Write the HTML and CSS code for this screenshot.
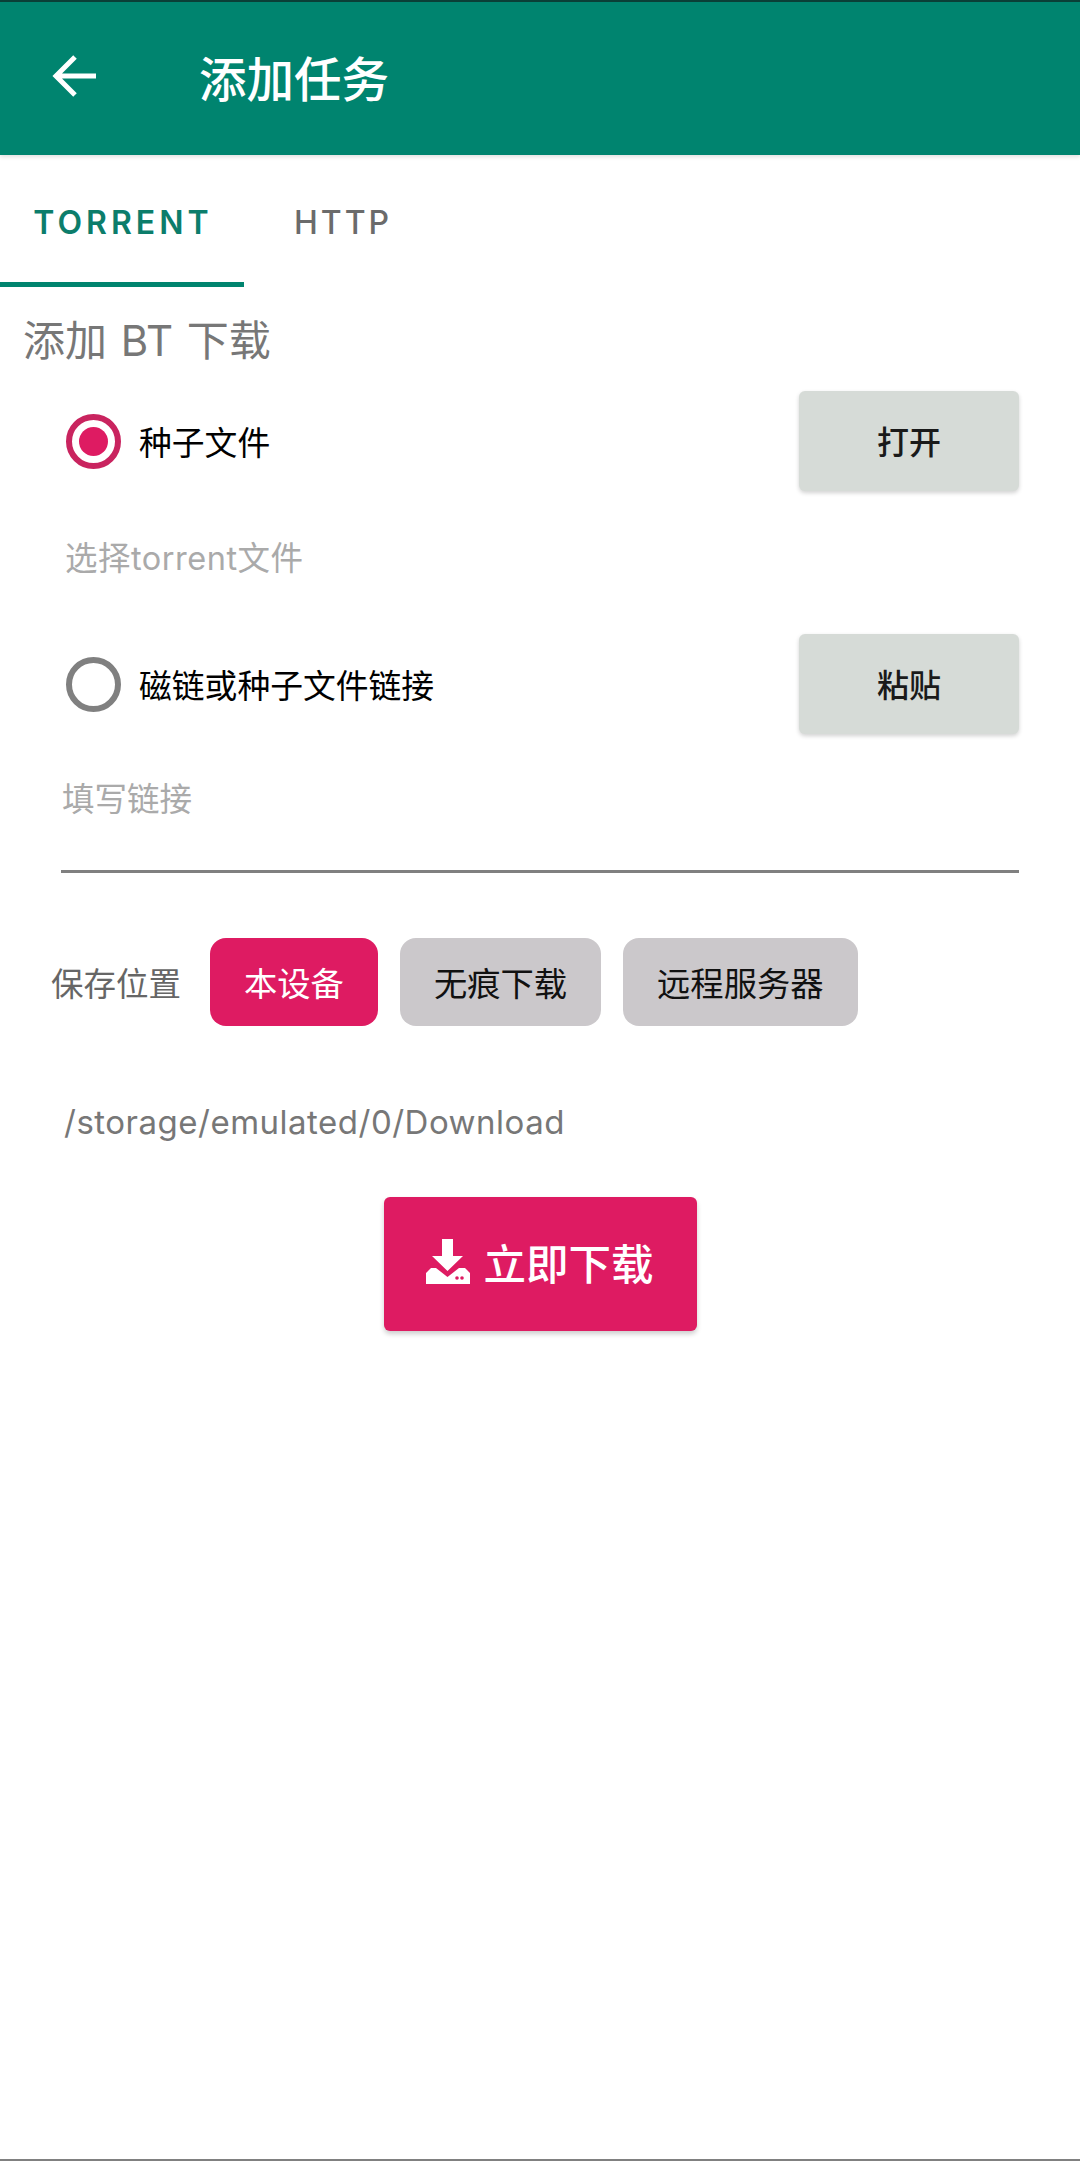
FILE: index.html
```html
<!DOCTYPE html>
<html lang="zh-CN">
<head>
    <meta charset="UTF-8">
    <meta name="viewport" content="width=device-width, initial-scale=1.0">
    <title>添加任务</title>
    <link rel="stylesheet" href="styles.css">
</head>
<body>
    <header class="appbar">
        <svg class="back-icon" viewBox="0 0 44 44" width="44" height="44">
            <path d="M44 22H4M23 3L4 22L23 41" fill="none" stroke="#fff" stroke-width="5"/>
        </svg>
        <h1 class="appbar-title">添加任务</h1>
    </header>

    <nav class="tabs">
        <div class="tab tab-active">TORRENT</div>
        <div class="tab">HTTP</div>
    </nav>

    <main class="content">
        <h2 class="section-title">添加 BT 下载</h2>

        <div class="source-row">
            <label class="radio-label">
                <span class="radio radio-checked"></span>
                种子文件
            </label>
            <button class="btn-light">打开</button>
        </div>
        <div class="hint file-hint">选择torrent文件</div>

        <div class="source-row">
            <label class="radio-label">
                <span class="radio"></span>
                磁链或种子文件链接
            </label>
            <button class="btn-light">粘贴</button>
        </div>
        <div class="hint link-input">填写链接</div>

        <div class="save-row">
            <span class="save-label">保存位置</span>
            <button class="chip chip-active">本设备</button>
            <button class="chip">无痕下载</button>
            <button class="chip">远程服务器</button>
        </div>

        <div class="save-path">/storage/emulated/0/Download</div>

        <div class="submit-row">
            <button class="btn-download">
                <svg class="download-icon" viewBox="0 0 44 45" width="44" height="45">
                    <path d="M16 0H27V17H37L21.500 32L6 17H16Z" fill="#fff"/>
                    <path d="M5 29H10L21.500 38L33 29H39L44 34V45H0V34Z" fill="#fff"/>
                    <circle cx="31" cy="39" r="1.800" fill="#de1b62"/>
                    <circle cx="36" cy="39" r="1.800" fill="#de1b62"/>
                </svg>
                立即下载
            </button>
        </div>
    </main>
</body>
</html>
```

FILE: styles.css
```css
* {
    box-sizing: border-box;
}

body {
    margin: 0;
    height: 2161px;
    background: #fff;
    border-bottom: 2px solid #808080;
    font-family: 'Inter', 'Noto Sans CJK SC', sans-serif;
    overflow: hidden;
}

.appbar {
    display: flex;
    align-items: center;
    height: 155px;
    padding-left: 52px;
    background: #00846f;
    border-top: 2px solid #0a3f37;
    box-shadow: 0 2px 4px rgba(0, 0, 0, 0.12);
}

.back-icon {
    flex: none;
    margin-top: -5px;
}

.appbar-title {
    margin: -4px 0 0 103px;
    font-size: 47.500px;
    font-weight: 500;
    color: #fff;
}

.tabs {
    display: flex;
    height: 132px;
}

.tab {
    display: flex;
    justify-content: center;
    width: 244px;
    padding-top: 50px;
    font-size: 32px;
    line-height: 36px;
    font-weight: 500;
    letter-spacing: 3px;
    color: #6b6b6b;
}

.tab-active {
    padding-left: 2px;
    letter-spacing: 4px;
    color: #0c7d6b;
    font-weight: 600;
    border-bottom: 5px solid #00846f;
}

.tab + .tab {
    width: 198px;
}

.section-title {
    margin: 0;
    height: 104px;
    padding-left: 23px;
    font-size: 42px;
    line-height: 107px;
    font-weight: 400;
    word-spacing: 2px;
    color: #777;
}

.source-row {
    display: flex;
    justify-content: space-between;
    align-items: center;
    height: 100px;
    padding: 0 61px 0 66px;
}

.radio-label {
    display: flex;
    align-items: center;
    padding-bottom: 2px;
    font-size: 32.800px;
    color: #000;
}

.radio {
    display: flex;
    justify-content: center;
    align-items: center;
    width: 55px;
    height: 55px;
    margin: 2px 18px 0 0;
    border: 6px solid #808080;
    border-radius: 50%;
}

.radio-checked {
    border-color: #c9245f;
}

.radio-checked::after {
    content: "";
    width: 29px;
    height: 29px;
    border-radius: 50%;
    background: #de1b62;
}

.btn-light {
    width: 220px;
    height: 100px;
    padding-bottom: 3px;
    border: none;
    border-radius: 6px;
    background: #d6dbd7;
    font-family: inherit;
    font-size: 32px;
    font-weight: 500;
    color: #1a1a1a;
    box-shadow: 0 2px 4px rgba(0, 0, 0, 0.18);
}

.hint {
    font-size: 32.500px;
    color: #aaa;
}

.file-hint {
    height: 143px;
    padding: 48px 0 0 65px;
    line-height: 40px;
    letter-spacing: 0.500px;
}

.link-input {
    height: 139px;
    margin: 0 61px;
    padding: 46px 0 0 1px;
    line-height: 40px;
    border-bottom: 3px solid #808080;
}

.save-row {
    display: flex;
    align-items: center;
    margin-top: 65px;
    padding-left: 51px;
}

.save-label {
    width: 159px;
    padding-bottom: 2px;
    font-size: 32.500px;
    color: #666;
}

.chip {
    height: 88px;
    margin-right: 22px;
    padding: 0 34px 2px;
    border: none;
    border-radius: 16px;
    background: #cbc8cb;
    font-family: inherit;
    font-size: 33.300px;
    color: #111;
}

.chip-active {
    background: #de1b62;
    color: #fff;
}

.save-path {
    margin-top: 76px;
    padding-left: 64px;
    font-size: 33px;
    line-height: 40px;
    letter-spacing: 0.500px;
    color: #777;
}

.submit-row {
    display: flex;
    justify-content: center;
    margin-top: 55px;
}

.btn-download {
    display: flex;
    justify-content: center;
    align-items: center;
    gap: 13px;
    width: 313px;
    height: 134px;
    padding-bottom: 7px;
    border: none;
    border-radius: 6px;
    background: #de1b62;
    font-family: inherit;
    font-size: 42.500px;
    font-weight: 500;
    color: #fff;
    box-shadow: 0 3px 5px rgba(0, 0, 0, 0.2);
}

.download-icon {
    flex: none;
}
```
